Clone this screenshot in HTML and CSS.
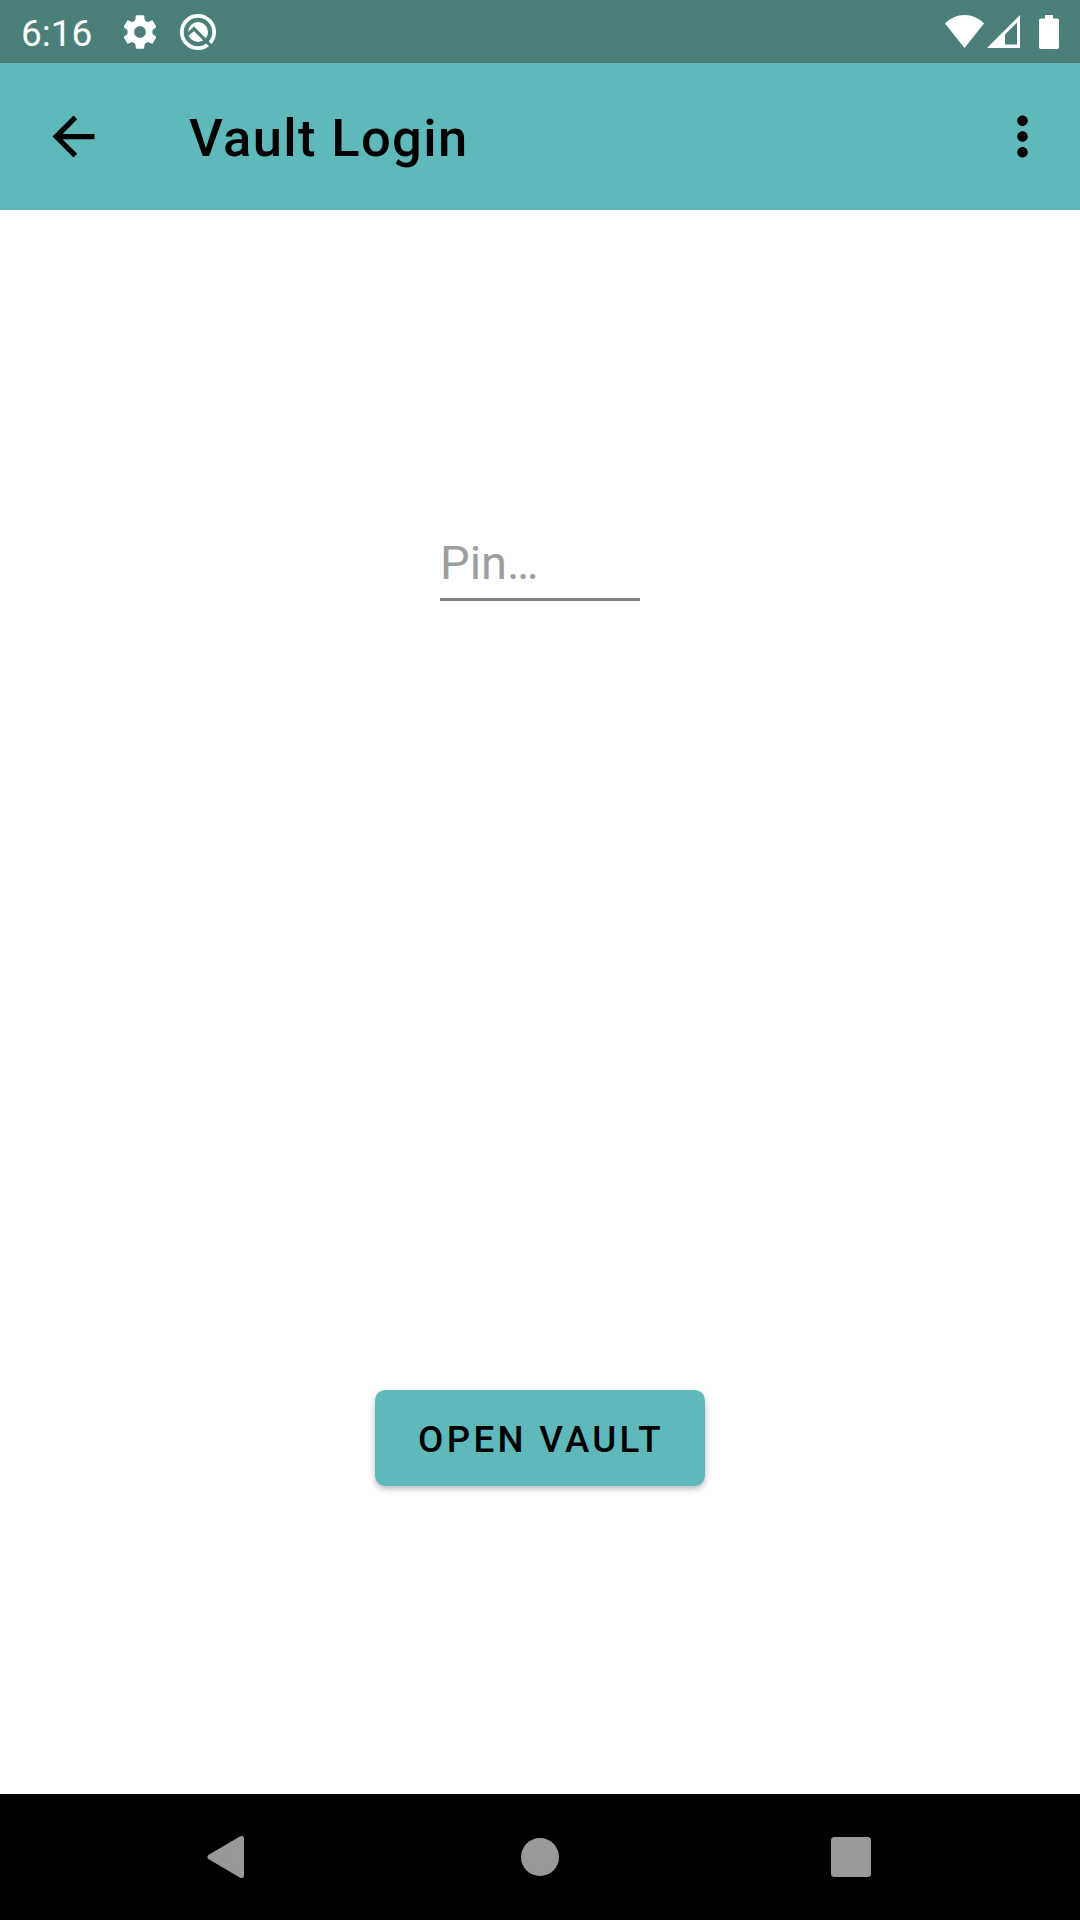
FILE: index.html
```html
<!DOCTYPE html>
<html lang="en">
<head>
<meta charset="utf-8">
<title>Vault Login</title>
<link rel="stylesheet" href="styles.css">
</head>
<body>
<div class="screen">
  <div class="status-bar">
    <div class="status-left">
      <span class="clock">6:16</span>
      <svg class="gear" width="40" height="40" viewBox="0 0 24 24"><path fill="#fff" d="M19.43 12.98c.04-.32.07-.64.07-.98s-.03-.66-.07-.98l2.11-1.65c.19-.15.24-.42.12-.64l-2-3.46c-.12-.22-.39-.3-.61-.22l-2.49 1c-.52-.4-1.08-.73-1.69-.98l-.38-2.65C14.46 2.18 14.25 2 14 2h-4c-.25 0-.46.18-.49.42l-.38 2.65c-.61.25-1.17.59-1.69.98l-2.49-1c-.23-.09-.49 0-.61.22l-2 3.46c-.13.22-.07.49.12.64l2.11 1.65c-.04.32-.07.65-.07.98s.03.66.07.98l-2.11 1.65c-.19.15-.24.42-.12.64l2 3.46c.12.22.39.3.61.22l2.49-1c.52.4 1.08.73 1.69.98l.38 2.65c.03.24.24.42.49.42h4c.25 0 .46-.18.49-.42l.38-2.65c.61-.25 1.17-.59 1.69-.98l2.49 1c.23.09.49 0 .61-.22l2-3.46c.12-.22.07-.49-.12-.64l-2.11-1.65zM12 15.5c-1.93 0-3.5-1.57-3.5-3.5s1.57-3.5 3.5-3.5 3.5 1.57 3.5 3.5-1.57 3.5-3.5 3.5z"/></svg>
      <svg class="q-icon" width="38" height="38" viewBox="0 0 38 38">
        <circle cx="19" cy="19" r="16.200" fill="none" stroke="#fff" stroke-width="3.800"/>
        <circle cx="19" cy="19" r="10" fill="#fff"/>
        <path d="M8.500 21.500L15 15.800L33 34" fill="none" stroke="#4a8079" stroke-width="3.200"/>
      </svg>
    </div>
    <div class="status-right">
      <svg width="39" height="33" viewBox="0 0 39 33"><path fill="#fff" d="M0 8.500C5.500 3 12 0 19.500 0S33.500 3 39 8.500L19.500 33z"/></svg>
      <svg class="signal" width="33" height="33" viewBox="0 0 33 33"><path fill="#fff" fill-rule="evenodd" d="M33 0V33H0zM30 7.500L18 19.500V29.500H30z"/></svg>
      <svg class="battery" width="20" height="34" viewBox="0 0 20 34"><path fill="#fff" d="M6 0H14V3.500H18Q20 3.500 20 5.500V32Q20 34 18 34H2Q0 34 0 32V5.500Q0 3.500 2 3.500H6z"/></svg>
    </div>
  </div>
  <header class="app-bar">
    <svg class="back" width="63" height="63" viewBox="0 0 24 24"><path d="M20 11H7.830l5.590-5.590L12 4l-8 8 8 8 1.410-1.410L7.830 13H20v-2z"/></svg>
    <h1 class="title">Vault Login</h1>
    <svg class="more" width="63" height="63" viewBox="0 0 24 24"><path d="M12 8c1.100 0 2-.9 2-2s-.9-2-2-2-2 .9-2 2 .9 2 2 2zm0 2c-1.100 0-2 .9-2 2s.9 2 2 2 2-.9 2-2-.9-2-2-2zm0 6c-1.100 0-2 .9-2 2s.9 2 2 2 2-.9 2-2-.9-2-2-2z"/></svg>
  </header>
  <main class="content">
    <input class="pin" type="text" placeholder="Pin…" aria-label="Pin">
    <button class="open" type="button">OPEN VAULT</button>
  </main>
  <nav class="nav-bar">
    <svg width="38" height="42" viewBox="0 0 38 42"><path fill="#999" stroke="#999" stroke-width="5" stroke-linejoin="round" d="M3 21L34.500 2.500V39.500z"/></svg>
    <svg width="38" height="38" viewBox="0 0 38 38"><circle cx="19" cy="19" r="19" fill="#999"/></svg>
    <svg width="40" height="40" viewBox="0 0 40 40"><rect width="40" height="40" rx="3.500" fill="#999"/></svg>
  </nav>
</div>
</body>
</html>
```
FILE: styles.css
```css
* { box-sizing: border-box; }

body {
  margin: 0;
  background: #fff;
  font-family: Roboto, sans-serif;
}

svg { display: block; flex: none; }

.screen {
  width: 1080px;
  height: 1920px;
  display: flex;
  flex-direction: column;
}

.status-bar {
  height: 63px;
  flex: none;
  display: flex;
  justify-content: space-between;
  align-items: center;
  padding: 0 21px;
  background: #4a8079;
}

.status-left,
.status-right {
  display: flex;
  align-items: center;
}

.clock {
  width: 99px;
  padding-top: 3px;
  font-size: 37px;
  line-height: 43px;
  color: #fff;
}

.q-icon { margin-left: 19px; }
.signal { margin-left: 3px; }
.battery { margin-left: 19px; }

.app-bar {
  height: 147px;
  flex: none;
  display: flex;
  align-items: center;
  padding: 0 26px 0 42px;
  background: #5fb9bb;
}

.title {
  flex: 1;
  margin: 0 0 0 84px;
  padding-top: 3px;
  font-size: 52.5px;
  font-weight: 500;
  line-height: 62px;
  letter-spacing: 1.35px;
  color: #000;
}

.content {
  flex: 1;
  display: flex;
  flex-direction: column;
  align-items: center;
}

.pin {
  width: 200px;
  height: 69px;
  margin-top: 322px;
  padding: 0 0 5px;
  border: 0;
  border-bottom: 3px solid #808080;
  border-radius: 0;
  outline: none;
  background: none;
  font: 400 47px Roboto, sans-serif;
  color: #000;
}

.pin::placeholder { color: #9e9e9e; opacity: 1; }

.open {
  width: 330px;
  height: 96px;
  margin-top: 789px;
  padding: 2px 0 0 2px;
  border: 0;
  border-radius: 10.5px;
  background: #5fb9bb;
  box-shadow: 0 3px 6px rgba(0, 0, 0, 0.28);
  font: 500 36.75px Roboto, sans-serif;
  letter-spacing: 3.28px;
  color: #000;
}

.nav-bar {
  height: 126px;
  flex: none;
  display: flex;
  justify-content: space-between;
  align-items: center;
  padding: 0 209px 0 207px;
  background: #000;
}

.nav-bar svg:nth-child(2) { margin-left: 3px; }
```
